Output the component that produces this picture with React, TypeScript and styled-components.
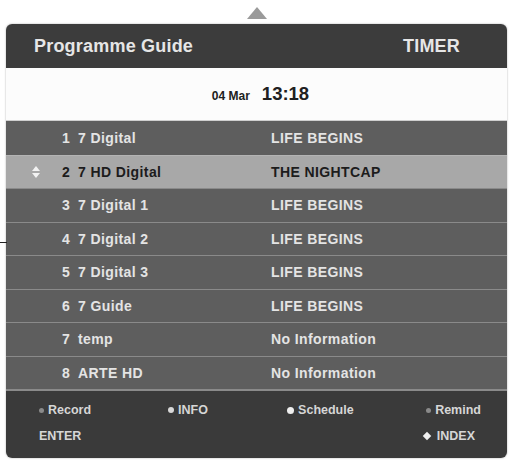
import React from "react";
import styled, { createGlobalStyle } from "styled-components";

const Global = createGlobalStyle`
  html, body { margin: 0; padding: 0; background: #ffffff; }
  body { font-family: "Liberation Sans", Arial, sans-serif; }
`;

const Page = styled.div`
  position: relative;
  width: 509px;
  height: 462px;
  padding-top: 7px;
  box-sizing: border-box;
`;

const UpArrow = styled.div`
  width: 0;
  height: 0;
  margin: 0 auto 5px;
  transform: translateX(2px);
  border-left: 10px solid transparent;
  border-right: 10px solid transparent;
  border-bottom: 12px solid #9a9a9a;
`;

const SideTick = styled.div`
  position: absolute;
  left: 0;
  top: 242px;
  width: 7px;
  height: 1px;
  background: #222;
`;

const Panel = styled.div`
  margin-left: 6px;
  width: 501px;
  border-radius: 6px;
  overflow: hidden;
  box-shadow: 0 0 2px rgba(0, 0, 0, 0.35);
`;

const Header = styled.div`
  height: 44px;
  background: #3c3c3c;
  display: flex;
  align-items: center;
  justify-content: space-between;
  padding: 0 47px 0 28px;
  color: #e6e6e6;
  font-weight: bold;
  font-size: 18px;
  letter-spacing: 0.2px;
`;

const DateBar = styled.div`
  height: 52px;
  background: #fcfcfc;
  display: flex;
  align-items: center;
  justify-content: center;
  gap: 12px;
  color: #202020;
  font-weight: bold;
  padding-left: 8px;
  border-bottom: 1px solid #cfcfcf;
`;

const DateSmall = styled.span`
  font-size: 12px;
  margin-top: 3px;
`;

const Time = styled.span`
  font-size: 18.5px;
`;

const List = styled.div`
  display: flex;
  flex-direction: column;
`;

const Row = styled.div<{ $active?: boolean }>`
  height: 33.5px;
  box-sizing: border-box;
  border-top: 1px solid ${(p) => (p.$active ? "#b4b4b4" : "#8a8a8a")};
  background: ${(p) => (p.$active ? "#a8a8a8" : "#5e5e5e")};
  color: ${(p) => (p.$active ? "#1c1c1c" : "#e4e4e4")};
  display: grid;
  grid-template-columns: 32px 16px 193px 1fr;
  align-items: center;
  padding-left: 24px;
  font-weight: bold;
  font-size: 14px;
  letter-spacing: 0.4px;
  &:first-child { border-top: none; }
`;

const Marker = styled.div`
  display: flex;
  flex-direction: column;
  align-items: center;
  gap: 2px;
  width: 12px;
`;

const Tri = styled.div<{ $down?: boolean }>`
  width: 0;
  height: 0;
  border-left: 4px solid transparent;
  border-right: 4px solid transparent;
  ${(p) =>
    p.$down
      ? "border-top: 5px solid #f2f2f2;"
      : "border-bottom: 5px solid #f2f2f2;"}
`;

const Footer = styled.div`
  height: 69px;
  background: #3a3a3a;
  border-top: 2px solid #8a8a8a;
  box-sizing: border-box;
  padding: 12px 26px 0 33px;
  color: #d6d6d6;
  font-weight: bold;
  font-size: 12.5px;
  display: flex;
  flex-direction: column;
  gap: 12px;
`;

const FootLine = styled.div<{ $right?: number }>`
  display: flex;
  justify-content: space-between;
  align-items: center;
  ${(p) => (p.$right ? `padding-right: ${p.$right}px;` : "")}
`;

const Key = styled.div<{ $w?: number }>`
  display: flex;
  align-items: center;
  gap: 4px;
  ${(p) => (p.$w ? `width: ${p.$w}px;` : "")}
`;

const Dot = styled.span<{ $c: string; $s: number }>`
  width: ${(p) => p.$s}px;
  height: ${(p) => p.$s}px;
  border-radius: 50%;
  background: ${(p) => p.$c};
`;

const Diamond = styled.span`
  width: 6px;
  height: 6px;
  background: #f0f0f0;
  transform: rotate(45deg);
  margin-right: 3px;
`;

const rows = [
  ["1", "7 Digital", "LIFE BEGINS"],
  ["2", "7 HD Digital", "THE NIGHTCAP"],
  ["3", "7 Digital 1", "LIFE BEGINS"],
  ["4", "7 Digital 2", "LIFE BEGINS"],
  ["5", "7 Digital 3", "LIFE BEGINS"],
  ["6", "7 Guide", "LIFE BEGINS"],
  ["7", "temp", "No Information"],
  ["8", "ARTE HD", "No Information"],
];

export default function App() {
  return (
    <Page>
      <Global />
      <UpArrow />
      <SideTick />
      <Panel>
        <Header>
          <span>Programme Guide</span>
          <span>TIMER</span>
        </Header>
        <DateBar>
          <DateSmall>04 Mar</DateSmall>
          <Time>13:18</Time>
        </DateBar>
        <List>
          {rows.map(([n, name, prog], i) => (
            <Row key={n} $active={i === 1}>
              <div>
                {i === 1 && (
                  <Marker>
                    <Tri />
                    <Tri $down />
                  </Marker>
                )}
              </div>
              <span>{n}</span>
              <span>{name}</span>
              <span>{prog}</span>
            </Row>
          ))}
        </List>
        <Footer>
          <FootLine>
            <Key $w={120}>
              <Dot $c="#8a8a8a" $s={5} />
              Record
            </Key>
            <Key $w={110}>
              <Dot $c="#d8d8d8" $s={6} />
              INFO
            </Key>
            <Key $w={130}>
              <Dot $c="#eeeeee" $s={7} />
              Schedule
            </Key>
            <Key>
              <Dot $c="#8a8a8a" $s={5} />
              Remind
            </Key>
          </FootLine>
          <FootLine $right={6}>
            <Key>ENTER</Key>
            <Key>
              <Diamond />
              INDEX
            </Key>
          </FootLine>
        </Footer>
      </Panel>
    </Page>
  );
}
